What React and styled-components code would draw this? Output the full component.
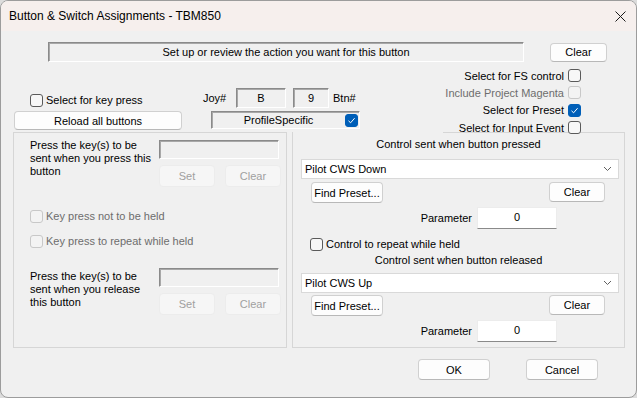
import styled, { createGlobalStyle } from 'styled-components';

const GlobalStyle = createGlobalStyle`
  html, body {
    margin: 0;
    padding: 0;
    background: #dcdcdc;
  }
  body {
    font-family: "Liberation Sans", Arial, sans-serif;
    font-size: 11px;
    color: #000;
  }
  * {
    box-sizing: border-box;
  }
`;

const Window = styled.div`
  width: 637px;
  height: 398px;
  border: 1px solid #9c9c9c;
  border-radius: 8px;
  overflow: hidden;
  background: #f0f0f0;
  display: flex;
  flex-direction: column;
`;

const TitleBar = styled.div`
  flex: none;
  height: 30px;
  background: #f6efed;
  display: flex;
  align-items: center;
  justify-content: space-between;
  padding: 0 10px 0 8px;
  font-size: 12px;
`;

const Body = styled.div`
  flex: 1;
  display: flex;
  flex-direction: column;
`;

const Row = styled.div`
  display: flex;
  align-items: ${(p) => p.$align || 'center'};
  margin-top: ${(p) => p.$top || 0}px;
  padding-left: ${(p) => p.$left || 0}px;
  height: ${(p) => (p.$h ? `${p.$h}px` : 'auto')};
`;

const Sunken = styled.div`
  width: ${(p) => p.$w}px;
  height: ${(p) => p.$h}px;
  margin-left: ${(p) => p.$ml || 0}px;
  border: 1px solid;
  border-color: #8a8a8a #ffffff #ffffff #8a8a8a;
  box-shadow: inset 1px 1px 0 #a8a8a8;
  background: #f0f0f0;
  display: flex;
  align-items: center;
  justify-content: ${(p) => (p.$between ? 'space-between' : 'center')};
  padding: ${(p) => (p.$between ? '0 1px 0 0' : '0')};
  font-size: 11px;
`;

const Button = styled.button`
  width: ${(p) => p.$w}px;
  height: ${(p) => p.$h || 21}px;
  margin-left: ${(p) => p.$ml || 0}px;
  padding: 0;
  font-family: inherit;
  font-size: 11px;
  color: ${(p) => (p.disabled ? '#a0a0a0' : '#000')};
  background: ${(p) => (p.disabled ? '#f6f6f6' : '#fdfdfd')};
  border: 1px solid ${(p) => (p.disabled ? '#ececec' : '#d0d0d0')};
  border-bottom-color: ${(p) => (p.disabled ? '#ececec' : '#b8b8b8')};
  border-radius: 4px;
  flex: none;
`;

const CheckWrap = styled.label`
  display: flex;
  align-items: center;
  gap: ${(p) => p.$gap ?? 3}px;
  color: ${(p) => (p.$disabled ? '#6d6d6d' : '#000')};
  width: ${(p) => (p.$w ? `${p.$w}px` : 'auto')};
  margin-left: ${(p) => p.$ml || 0}px;
  padding-top: ${(p) => p.$pt || 0}px;
  white-space: nowrap;
`;

const Box = styled.span`
  flex: none;
  width: 13px;
  height: 13px;
  border-radius: 3px;
  border: 1px solid ${(p) => (p.$checked ? '#005fb8' : p.$disabled ? '#c8c8c8' : '#5a5a5a')};
  background: ${(p) => (p.$checked ? '#005fb8' : p.$disabled ? '#f3f3f3' : '#f7f7f7')};
  display: flex;
  align-items: center;
  justify-content: center;
`;

const Check = ({ checked, disabled }) => (
  <Box $checked={checked} $disabled={disabled}>
    {checked && (
      <svg width="9" height="9" viewBox="0 0 9 9">
        <path d="M1.5 4.8 L3.6 6.8 L7.6 2.2" fill="none" stroke="#fff" strokeWidth="1" />
      </svg>
    )}
  </Box>
);

const MiddleRow = styled.div`
  display: flex;
  height: 64px;
  margin-top: 5px;
`;

const LeftCluster = styled.div`
  display: flex;
  flex-direction: column;
  padding-top: 21px;
`;

const RightChecks = styled.div`
  position: relative;
  z-index: 1;
  margin-left: auto;
  margin-right: 55px;
  display: flex;
  flex-direction: column;
  align-items: flex-end;
`;

const RightCheckRow = styled(CheckWrap)`
  flex: none;
  height: 17.3px;
  gap: 4px;
`;

const Label = styled.span`
  width: ${(p) => (p.$w ? `${p.$w}px` : 'auto')};
  margin-left: ${(p) => p.$ml || 0}px;
  text-align: ${(p) => p.$align || 'left'};
  flex: none;
`;

const Groups = styled.div`
  display: flex;
  margin-top: 1px;
  height: 216px;
`;

const LeftGroup = styled.div`
  margin-left: 12px;
  width: 274px;
  border: 1px solid #d6d6d6;
  display: flex;
  flex-direction: column;
`;

const RightGroup = styled.div`
  position: relative;
  margin-left: 5px;
  width: 333px;
  border: 1px solid #d6d6d6;
  border-top: none;
  padding-top: 1px;
  display: flex;
  flex-direction: column;

  &::before {
    content: '';
    position: absolute;
    top: 0;
    left: 150px;
    right: 0;
    border-top: 1px solid #d6d6d6;
  }
`;

const Section = styled.div`
  display: flex;
  margin-top: ${(p) => p.$top}px;
  padding-left: 16px;
`;

const Prompt = styled.div`
  width: 129px;
  line-height: 13px;
  margin-top: ${(p) => p.$offset}px;
`;

const Controls = styled.div`
  display: flex;
  flex-direction: column;
`;

const KeyField = styled(Sunken)`
  justify-content: flex-start;
`;

const GroupTitle = styled.div`
  text-align: center;
  line-height: 13px;
  margin-top: ${(p) => p.$top}px;
`;

const Select = styled.div`
  width: 318px;
  height: 20px;
  margin: ${(p) => p.$top}px 0 0 8px;
  background: #fff;
  border: 1px solid #d9d9d9;
  display: flex;
  align-items: center;
  justify-content: space-between;
  padding: 0 6px 0 3px;
`;

const ButtonBar = styled.div`
  display: flex;
  justify-content: space-between;
  align-items: flex-start;
  margin-top: ${(p) => p.$top}px;
  padding: 0 19px 0 18px;
`;

const ParamInput = styled.div`
  width: 80px;
  height: 22px;
  margin-left: 5px;
  background: #fff;
  border: 1px solid #ececec;
  border-bottom-color: #8a8a8a;
  display: flex;
  justify-content: center;
  padding-top: 3px;
`;

const Footer = styled.div`
  display: flex;
  margin-top: 11px;
  padding-left: 417px;
`;

const Chevron = () => (
  <svg width="9" height="6" viewBox="0 0 9 6">
    <path d="M1 1 L4.5 4.5 L8 1" fill="none" stroke="#606060" strokeWidth="1" />
  </svg>
);

const CloseIcon = () => (
  <svg width="11" height="11" viewBox="0 0 11 11">
    <path d="M0.5 0.5 L10.5 10.5 M10.5 0.5 L0.5 10.5" stroke="#1a1a1a" strokeWidth="1" />
  </svg>
);

const KeySection = ({ top, offset, lines }) => (
  <Section $top={top}>
    <Prompt $offset={offset}>
      {lines.map((l) => (
        <div key={l}>{l}</div>
      ))}
    </Prompt>
    <Controls>
      <KeyField $w={120} $h={19} />
      <Row $top={6}>
        <Button $w={56} $h={22} disabled>Set</Button>
        <Button $w={56} $h={22} $ml={10} disabled>Clear</Button>
      </Row>
    </Controls>
  </Section>
);

const ControlBlock = ({ title, titleTop, value, selectTop, barTop }) => (
  <>
    <GroupTitle $top={titleTop}>{title}</GroupTitle>
    <Select $top={selectTop}>
      <span>{value}</span>
      <Chevron />
    </Select>
    <ButtonBar $top={barTop}>
      <Button $w={72} $h={21}>Find Preset...</Button>
      <Button $w={56} $h={20}>Clear</Button>
    </ButtonBar>
    <Row $top={4} $h={22}>
      <Label $w={80} $ml={99} $align="right">Parameter</Label>
      <ParamInput>0</ParamInput>
    </Row>
  </>
);

const App = () => {
  return (
    <>
      <GlobalStyle />
      <Window>
        <TitleBar>
          <span>Button &amp; Switch Assignments - TBM850</span>
          <CloseIcon />
        </TitleBar>
        <Body>
          <Row $top={11} $h={20}>
            <Sunken $w={476} $h={20} $ml={47}>
              Set up or review the action you want for this button
            </Sunken>
            <Button $w={57} $h={19} $ml={26}>Clear</Button>
          </Row>

          <MiddleRow>
            <LeftCluster>
              <Row $h={20}>
                <CheckWrap $w={173} $ml={29} $pt={4}>
                  <Check />
                  Select for key press
                </CheckWrap>
                <Label $w={33}>Joy#</Label>
                <Sunken $w={50} $h={20}>B</Sunken>
                <Sunken $w={36} $h={20} $ml={7}>9</Sunken>
                <Label $ml={4}>Btn#</Label>
              </Row>
              <Row $top={3} $h={19} $align="flex-start">
                <Button $w={168} $h={19} $ml={13}>Reload all buttons</Button>
                <Sunken $w={149} $h={18} $ml={29} $between>
                  <span style={{ flex: 1, textAlign: 'center' }}>ProfileSpecific</span>
                  <Check checked />
                </Sunken>
              </Row>
            </LeftCluster>
            <RightChecks>
              <RightCheckRow>
                Select for FS control
                <Check />
              </RightCheckRow>
              <RightCheckRow $disabled>
                Include Project Magenta
                <Check disabled />
              </RightCheckRow>
              <RightCheckRow>
                Select for Preset
                <Check checked />
              </RightCheckRow>
              <RightCheckRow>
                Select for Input Event
                <Check />
              </RightCheckRow>
            </RightChecks>
          </MiddleRow>

          <Groups>
            <LeftGroup>
              <KeySection
                top={7}
                offset={-1}
                lines={['Press the key(s) to be', 'sent when you press this', 'button']}
              />
              <Row $top={20} $h={18} $left={16}>
                <CheckWrap $disabled>
                  <Check disabled />
                  Key press not to be held
                </CheckWrap>
              </Row>
              <Row $top={7} $h={18} $left={16}>
                <CheckWrap $disabled>
                  <Check disabled />
                  Key press to repeat while held
                </CheckWrap>
              </Row>
              <KeySection
                top={18}
                offset={2}
                lines={['Press the key(s) to be', 'sent when you release', 'this button']}
              />
            </LeftGroup>

            <RightGroup>
              <ControlBlock
                title="Control sent when button pressed"
                titleTop={5}
                value="Pilot CWS Down"
                selectTop={8}
                barTop={3}
              />
              <Row $top={7} $h={16} $left={17}>
                <CheckWrap>
                  <Check />
                  Control to repeat while held
                </CheckWrap>
              </Row>
              <ControlBlock
                title="Control sent when button released"
                titleTop={2}
                value="Pilot CWS Up"
                selectTop={6}
                barTop={2}
              />
            </RightGroup>
          </Groups>

          <Footer>
            <Button $w={72} $h={21}>OK</Button>
            <Button $w={72} $h={21} $ml={36}>Cancel</Button>
          </Footer>
        </Body>
      </Window>
    </>
  );
};

export default App;
